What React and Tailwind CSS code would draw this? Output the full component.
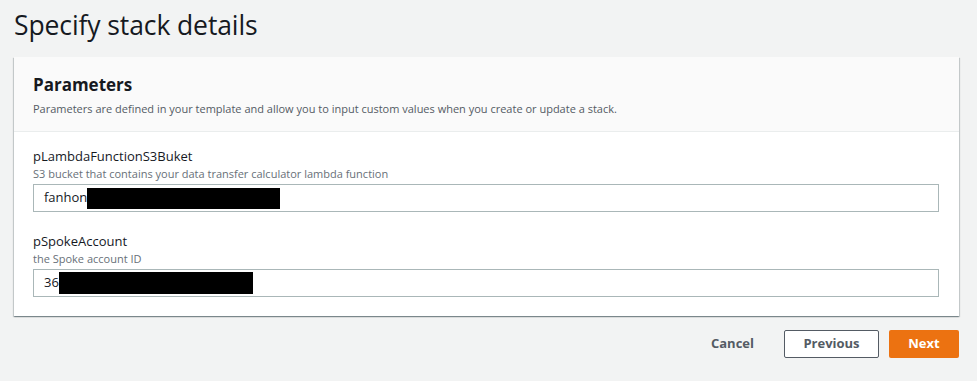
export default function App() {
  return (
    <div className="w-[977px] h-[381px] bg-[#f2f3f3] pl-[14px] pr-[18px] pt-[7px] text-[#16191f] font-['Open_Sans',sans-serif]">
      <h1 className="text-[26.5px] leading-[36px] font-normal tracking-[-0.1px]">Specify stack details</h1>
      <div className="mt-[14px] bg-white shadow-[0_1px_1px_0_rgba(0,28,36,0.3),1px_1px_1px_0_rgba(0,28,36,0.15),-1px_1px_1px_0_rgba(0,28,36,0.15)]">
        <div className="bg-[#fafafa] border-b border-[#eaeded] px-[19px] pt-[16px] pb-[14px]">
          <h2 className="text-[17px] leading-[24px] font-bold">Parameters</h2>
          <p className="text-[11px] leading-[16px] text-[#545b64] mt-[4px]">
            Parameters are defined in your template and allow you to input custom values when you create or update a stack.
          </p>
        </div>
        <div className="px-[19px] pt-[14px] pb-[19px]">
          <div>
            <div className="text-[13px] leading-[20px]">pLambdaFunctionS3Buket</div>
            <div className="text-[11px] leading-[16px] text-[#687078]">S3 bucket that contains your data transfer calculator lambda function</div>
            <div className="mt-[2px] mr-[1px] h-[28px] border border-[#aab7b8] flex items-center pl-[10px] text-[13px]">
              <span>fanhon</span>
              <span className="inline-block w-[193px] h-[21px] bg-black"></span>
            </div>
          </div>
          <div className="mt-[19px]">
            <div className="text-[13px] leading-[20px]">pSpokeAccount</div>
            <div className="text-[11px] leading-[16px] text-[#687078]">the Spoke account ID</div>
            <div className="mt-[2px] mr-[1px] h-[28px] border border-[#aab7b8] flex items-center pl-[10px] text-[13px]">
              <span>36</span>
              <span className="inline-block w-[194px] h-[22px] bg-black"></span>
            </div>
          </div>
        </div>
      </div>
      <div className="mt-[14px] flex justify-end items-center gap-[10px]">
        <button className="h-[28px] px-[20px] text-[13px] font-bold text-[#545b64]">Cancel</button>
        <button className="h-[28px] w-[95px] border border-[#545b64] bg-white text-[13px] font-bold text-[#545b64] rounded-[2px]">Previous</button>
        <button className="h-[28px] w-[70px] bg-[#ec7211] text-white text-[13px] font-bold rounded-[2px]">Next</button>
      </div>
    </div>
  );
}
